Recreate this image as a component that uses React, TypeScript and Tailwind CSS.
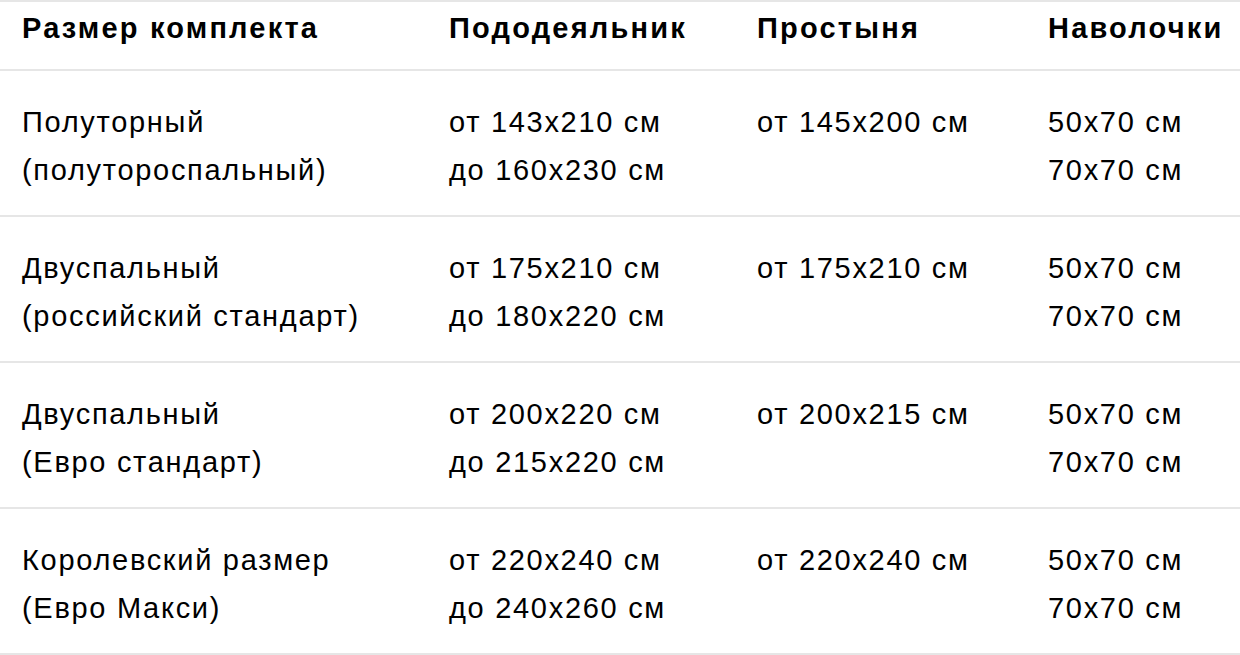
const rows = [
  {
    name: ['Полуторный', '(полутороспальный)'],
    duvet: ['от 143x210 см', 'до 160x230 см'],
    sheet: 'от 145x200 см',
  },
  {
    name: ['Двуспальный', '(российский стандарт)'],
    duvet: ['от 175x210 см', 'до 180x220 см'],
    sheet: 'от 175x210 см',
  },
  {
    name: ['Двуспальный', '(Евро стандарт)'],
    duvet: ['от 200x220 см', 'до 215x220 см'],
    sheet: 'от 200x215 см',
  },
  {
    name: ['Королевский размер', '(Евро Макси)'],
    duvet: ['от 220x240 см', 'до 240x260 см'],
    sheet: 'от 220x240 см',
  },
]

const cols = 'grid grid-cols-[427px_308px_291px_1fr] pl-[22px]'

export default function App() {
  return (
    <div className="w-[1240px] h-[655px] overflow-hidden bg-white text-black font-['Liberation_Sans',Arial,sans-serif]">
      <div className="border-t-2 border-[#e6e6e6]">
        <div className={`${cols} h-[69px] items-center text-[29px] tracking-[2.2px] font-bold border-b-2 border-[#e6e6e6] pb-[14px] whitespace-nowrap`}>
          <div>Размер комплекта</div>
          <div>Пододеяльник</div>
          <div>Простыня</div>
          <div>Наволочки</div>
        </div>
        {rows.map((row) => (
          <div
            key={row.name[0] + row.name[1]}
            className={`${cols} h-[146px] pt-[27px] text-[29px] tracking-[1.7px] leading-[48px] border-b-2 border-[#e6e6e6] whitespace-nowrap`}
          >
            <div>
              {row.name.map((l) => (
                <div key={l}>{l}</div>
              ))}
            </div>
            <div>
              {row.duvet.map((l) => (
                <div key={l}>{l}</div>
              ))}
            </div>
            <div>{row.sheet}</div>
            <div>
              <div>50x70 см</div>
              <div>70x70 см</div>
            </div>
          </div>
        ))}
      </div>
    </div>
  )
}
